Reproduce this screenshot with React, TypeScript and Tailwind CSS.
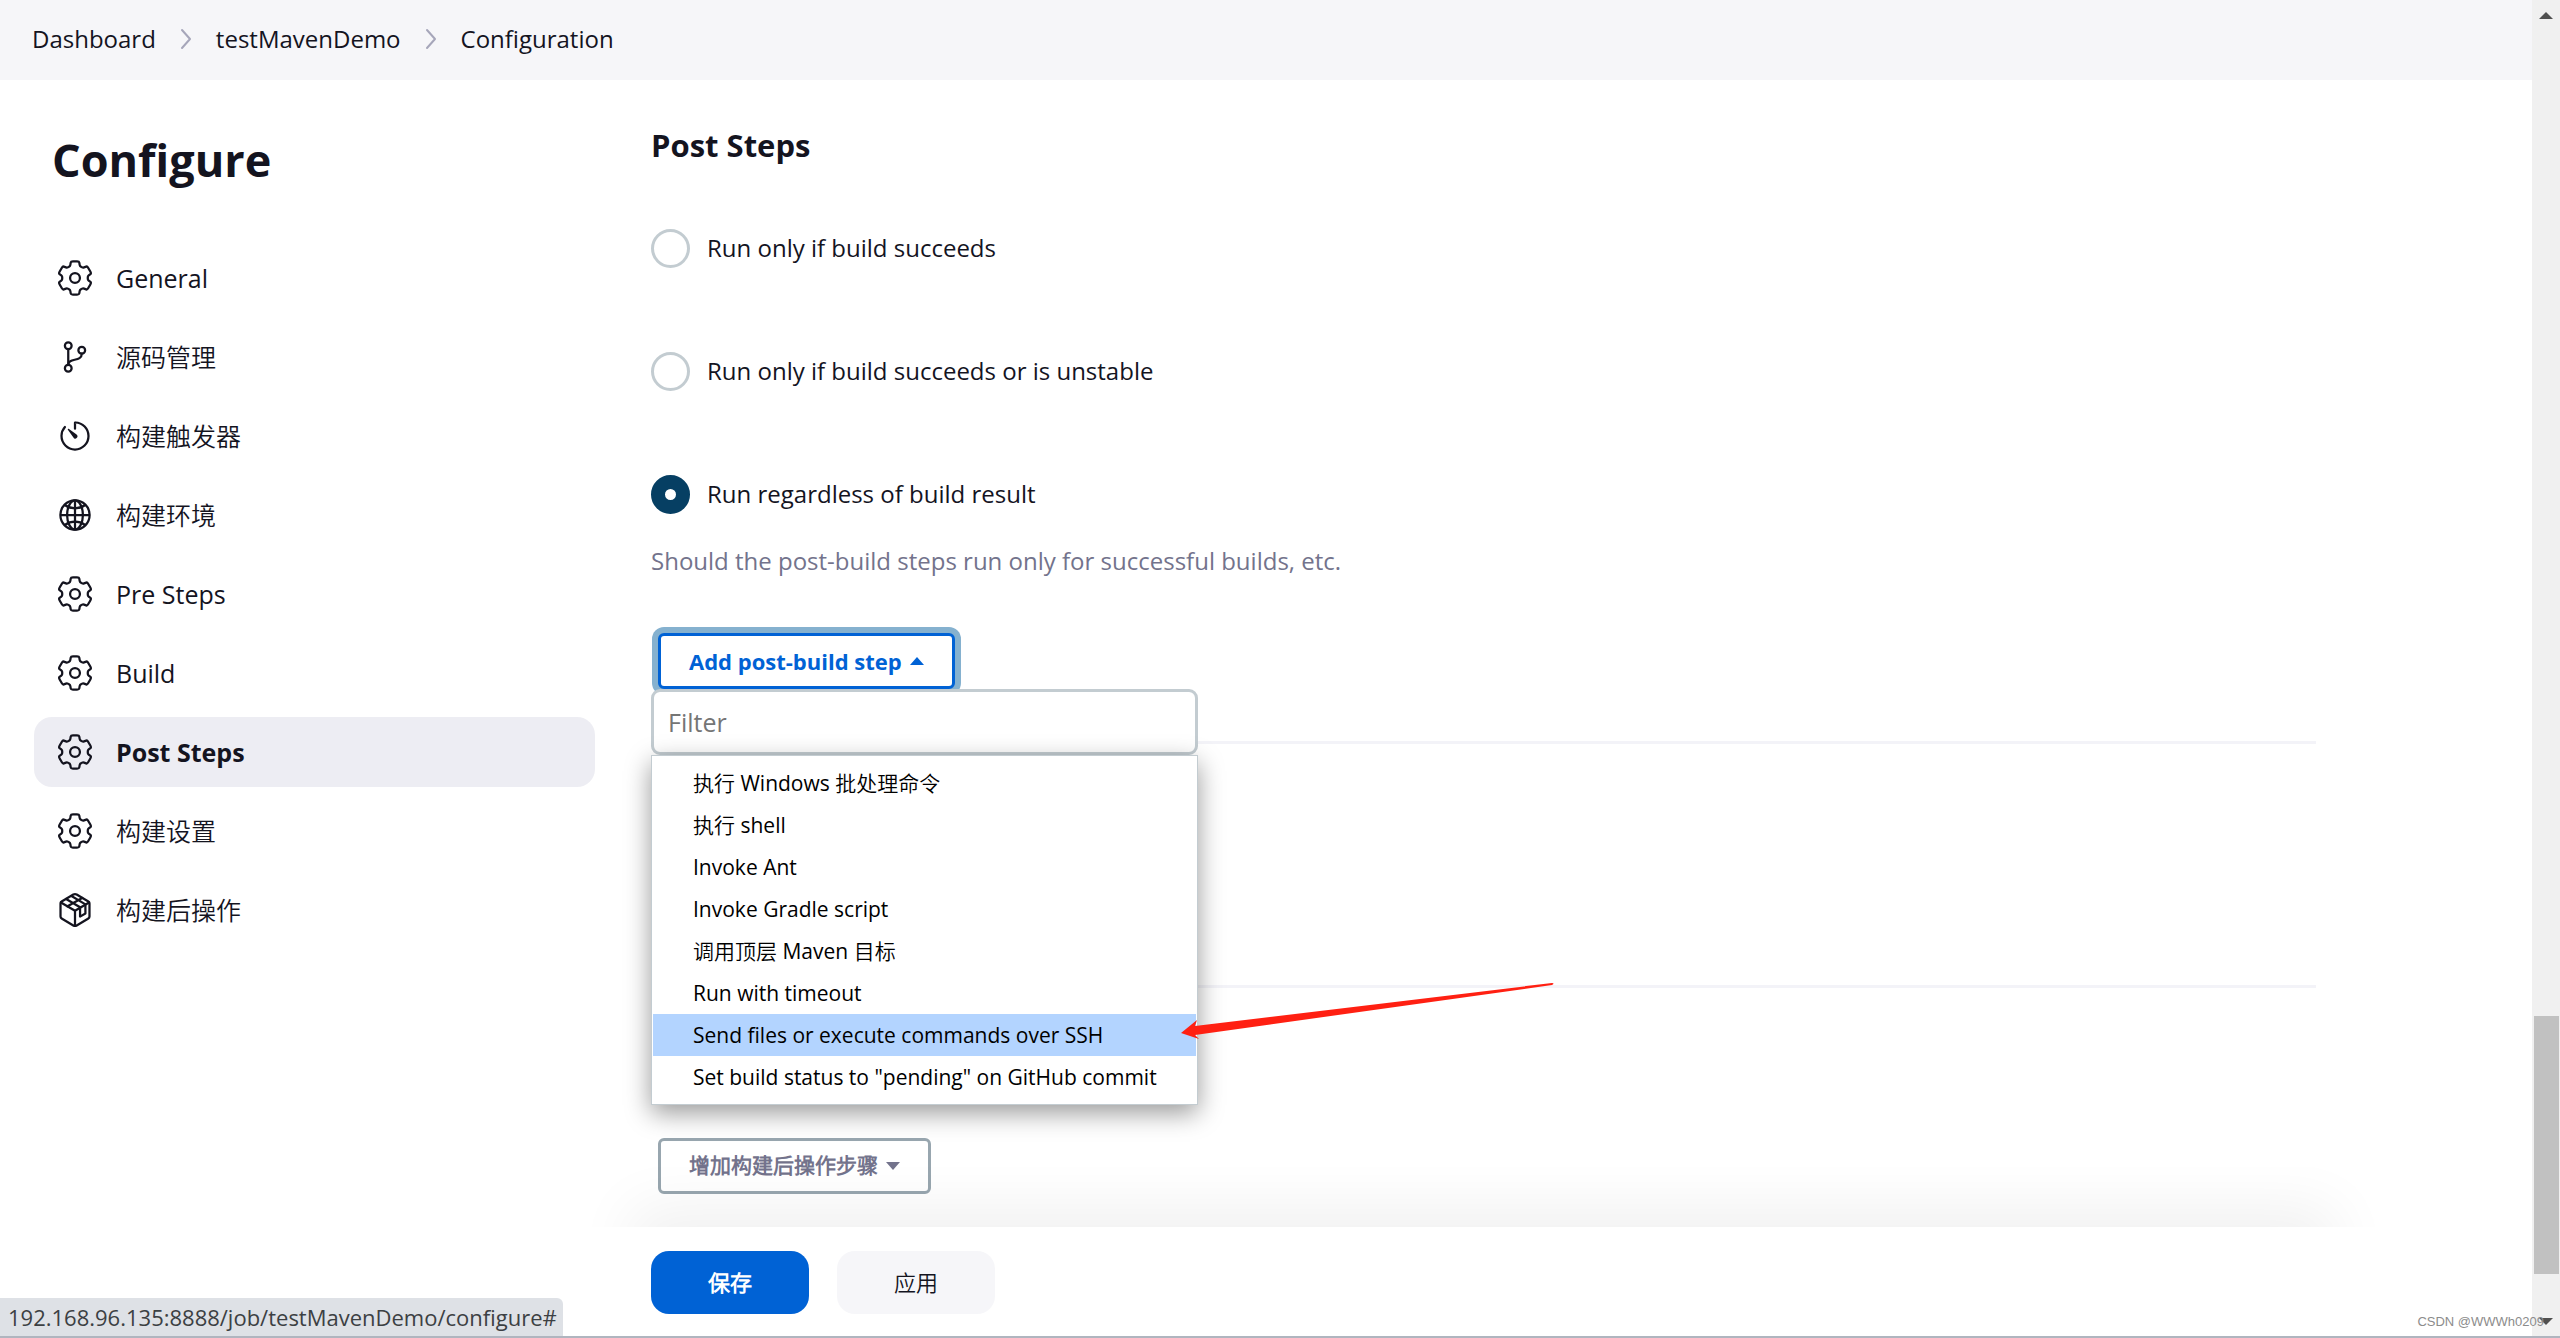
import { useState } from "react";
import { IoGitBranchOutline, IoGlobeOutline, IoTimerOutline } from "react-icons/io5";

/* Outline of a six-toothed gear: per tooth two outer corners and two notch corners. */
function gearOutline() {
  const points: [number, number][] = [];
  for (let tooth = 0; tooth < 6; tooth++) {
    const corners = [
      [-14, 242],
      [14, 242],
      [22, 184],
      [38, 184],
    ];
    for (const [offset, radius] of corners) {
      const angle = ((tooth * 60 + offset) * Math.PI) / 180;
      points.push([256 + radius * Math.sin(angle), 256 - radius * Math.cos(angle)]);
    }
  }
  const between = (a: [number, number], b: [number, number], t: number) =>
    `${(a[0] + (b[0] - a[0]) * t).toFixed(1)} ${(a[1] + (b[1] - a[1]) * t).toFixed(1)}`;
  const segments = points.map((p, i) => {
    const previous = points[(i + points.length - 1) % points.length];
    const next = points[(i + 1) % points.length];
    return `${i === 0 ? "M" : "L"}${between(p, previous, 0.25)}Q${p[0].toFixed(1)} ${p[1].toFixed(1)} ${between(p, next, 0.25)}`;
  });
  return segments.join("") + "Z";
}

const gearPath = gearOutline();

function GearIcon({ className }: { className?: string }) {
  return (
    <svg
      viewBox="0 0 512 512"
      className={className}
      fill="none"
      stroke="currentColor"
      strokeWidth="32"
      strokeLinejoin="round"
      aria-hidden="true"
    >
      <path d={gearPath} />
      <circle cx="256" cy="256" r="70" />
    </svg>
  );
}

function PackageIcon({ className }: { className?: string }) {
  return (
    <svg
      viewBox="0 0 512 512"
      className={className}
      fill="none"
      stroke="currentColor"
      strokeWidth="32"
      strokeLinecap="round"
      strokeLinejoin="round"
      aria-hidden="true"
    >
      <path d="M462 348V164a32 32 0 0 0-16-28L280 36a48 48 0 0 0-48 0L66 136a32 32 0 0 0-16 28v184a32 32 0 0 0 16 28l166 100a48 48 0 0 0 48 0l166-100a32 32 0 0 0 16-28z" />
      <path d="M56 148l200 118 200-118M256 480V266" />
      <path d="M130 100l198 118v132l76-44V176L206 58M150 204l208-120" />
    </svg>
  );
}

const sections = [
  { label: "General", Icon: GearIcon },
  { label: "源码管理", Icon: IoGitBranchOutline },
  { label: "构建触发器", Icon: IoTimerOutline },
  { label: "构建环境", Icon: IoGlobeOutline },
  { label: "Pre Steps", Icon: GearIcon },
  { label: "Build", Icon: GearIcon },
  { label: "Post Steps", Icon: GearIcon, active: true },
  { label: "构建设置", Icon: GearIcon },
  { label: "构建后操作", Icon: PackageIcon },
];

const conditions = [
  "Run only if build succeeds",
  "Run only if build succeeds or is unstable",
  "Run regardless of build result",
];

const steps = [
  "执行 Windows 批处理命令",
  "执行 shell",
  "Invoke Ant",
  "Invoke Gradle script",
  "调用顶层 Maven 目标",
  "Run with timeout",
  "Send files or execute commands over SSH",
  'Set build status to "pending" on GitHub commit',
];

function Separator() {
  return (
    <svg viewBox="0 0 12 24" className="h-6 w-3 text-[#a6a6ba]" fill="none" stroke="currentColor" strokeWidth="2" strokeLinecap="round" strokeLinejoin="round" aria-hidden="true">
      <path d="M2 3l8 9-8 9" />
    </svg>
  );
}

function Breadcrumbs() {
  return (
    <nav aria-label="Breadcrumb" className="flex h-20 items-center gap-6 bg-[#f6f6f9] px-8 pb-0.5 text-[24px] leading-8">
      <a href="#dashboard">Dashboard</a>
      <Separator />
      <a href="#project">testMavenDemo</a>
      <Separator />
      <a href="#configuration">Configuration</a>
    </nav>
  );
}

function Sidebar() {
  return (
    <aside className="w-[561px] shrink-0">
      <h1 className="mt-12 pl-[18px] text-[45px] leading-16 font-bold">Configure</h1>
      <nav aria-label="Sections" className="mt-[51px] flex flex-col gap-[9px]">
        {sections.map(({ label, Icon, active }) => (
          <a
            key={label}
            href="#section"
            className={
              active
                ? "flex h-[70px] items-center gap-[23px] rounded-[18px] bg-[#ededf3] px-[23px] text-[25px] font-bold"
                : "flex h-[70px] items-center gap-[23px] rounded-[18px] px-[23px] text-[25px]"
            }
          >
            <Icon className="size-9 shrink-0" />
            <span className="pt-0.5">{label}</span>
          </a>
        ))}
      </nav>
    </aside>
  );
}

function StepMenu() {
  const [filter, setFilter] = useState("");
  return (
    <div className="absolute top-full -left-[7px] z-10 w-[547px]">
      <input
        type="text"
        aria-label="Filter"
        placeholder="Filter"
        value={filter}
        onChange={(e) => setFilter(e.target.value)}
        className="block h-[66px] w-full rounded-[9px] border-3 border-[#c3ccd1] bg-white px-3.5 text-[25px] placeholder:text-[#757575] focus:outline-none"
      />
      <ul className="border border-[#c3ccd1] bg-white px-px py-1.5 text-[21px] leading-[42px] text-black shadow-[0_8px_24px_rgba(0,0,0,0.4)]">
        {steps
          .filter((s) => s.toLowerCase().includes(filter.toLowerCase()))
          .map((s) => (
            <li key={s}>
              <a href="#step" className={s.startsWith("Send files") ? "block bg-[#b3d4ff] pl-10" : "block pl-10"}>
                {s}
              </a>
            </li>
          ))}
      </ul>
    </div>
  );
}

function PointerArrow() {
  return (
    <svg viewBox="0 0 374 60" className="pointer-events-none absolute top-[346px] left-[523px] z-20 h-[60px] w-[374px]" aria-hidden="true">
      <path fill="#ff2012" d="M0 54L16 41L14 47L371 4Q374 4 371 6L14 56L18 60Z" />
    </svg>
  );
}

function PostSteps() {
  const [selected, setSelected] = useState(2);
  return (
    <section className="pt-[43px]">
      <h2 className="text-[31px] leading-11 font-bold">Post Steps</h2>
      <div role="radiogroup" aria-label="Post Steps" className="mt-[61px] flex flex-col gap-[83px]">
        {conditions.map((label, i) => (
          <label key={label} className="flex h-10 items-center gap-[17px] text-[24px]">
            <input
              type="radio"
              name="condition"
              checked={selected === i}
              onChange={() => setSelected(i)}
              className="size-[39px] appearance-none rounded-full border-3 border-[#c3ccd1] bg-white checked:border-14 checked:border-[#063f63]"
            />
            <span>{label}</span>
          </label>
        ))}
      </div>
      <p className="mt-[31px] text-[24px] leading-8 text-[#73738c]">
        Should the post-build steps run only for successful builds, etc.
      </p>
      <div className="relative mt-14 ml-[7px] w-max">
        <button
          type="button"
          aria-expanded="true"
          className="flex h-14 items-center gap-2 rounded-md border-3 border-[#0062d5] bg-white px-7 text-[22px] font-bold text-[#0062d5] ring-6 ring-[#85b1cf]"
        >
          Add post-build step
          <svg viewBox="0 0 14 8" className="h-2 w-3.5" fill="currentColor" aria-hidden="true">
            <path d="M0 8L7 0l7 8z" />
          </svg>
        </button>
        <StepMenu />
        <PointerArrow />
      </div>
      <hr className="mt-13 border-t-3 border-[#f3f3f8]" />
      <hr className="mt-[241px] border-t-3 border-[#f3f3f8]" />
      <button
        type="button"
        className="mt-[150px] ml-[7px] flex h-14 items-center gap-2 rounded-md border-3 border-[#98a6af] bg-white px-7 text-[21px] font-bold text-[#73738c]"
      >
        增加构建后操作步骤
        <svg viewBox="0 0 14 8" className="h-2 w-3.5" fill="currentColor" aria-hidden="true">
          <path d="M0 0h14L7 8z" />
        </svg>
      </button>
    </section>
  );
}

function ActionBar() {
  return (
    <div className="relative mt-auto flex gap-7 bg-white pt-6 pb-[22px]">
      <div className="pointer-events-none absolute -inset-x-15 bottom-full h-15 overflow-hidden px-15">
        <div className="mt-15 h-27 shadow-[0_0_60px_20px_rgba(0,0,0,0.06)]" />
      </div>
      <button type="button" className="h-[63px] w-[158px] rounded-[18px] bg-[#0062d5] text-[22px] font-bold text-white">
        保存
      </button>
      <button type="button" className="h-[63px] w-[158px] rounded-[18px] bg-[#f6f6f9] text-[22px]">
        应用
      </button>
    </div>
  );
}

function Scrollbar() {
  return (
    <div className="flex w-7 shrink-0 flex-col items-center bg-[#f0f0f0] text-[#505050]" aria-hidden="true">
      <svg viewBox="0 0 14 7" className="mt-3 h-[7px] w-3.5" fill="currentColor">
        <path d="M0 7l7-7 7 7z" />
      </svg>
      <div className="mt-auto h-[258px] w-[25px] bg-[#c1c1c1]" />
      <svg viewBox="0 0 14 7" className="mt-11 mb-[11px] h-[7px] w-3.5" fill="currentColor">
        <path d="M0 0h14L7 7z" />
      </svg>
    </div>
  );
}

export default function App() {
  return (
    <div className="relative flex min-h-screen border-b-2 border-[#b0b5bf] bg-white font-['Open_Sans','Noto_Sans_CJK_SC_DemiLight','Noto_Sans_CJK_SC_Light','Noto_Sans_CJK_SC',sans-serif] text-[#14141f]">
      <div className="flex min-w-0 flex-1 flex-col">
        <Breadcrumbs />
        <div className="flex flex-1 gap-14 pr-[216px] pl-[34px]">
          <Sidebar />
          <main className="flex min-w-0 flex-1 flex-col">
            <PostSteps />
            <ActionBar />
          </main>
        </div>
      </div>
      <Scrollbar />
      <div className="absolute bottom-0 left-0 rounded-tr-md bg-[#dee1e6] pr-1.5 pl-2 text-[22px] leading-[38px] text-[#3c4043]">
        192.168.96.135:8888/job/testMavenDemo/configure#
      </div>
      <div className="absolute right-4 bottom-1 font-['Liberation_Sans',sans-serif] text-[13px] leading-5 text-[#8c8c8c]">
        CSDN @WWWh0209
      </div>
    </div>
  );
}
